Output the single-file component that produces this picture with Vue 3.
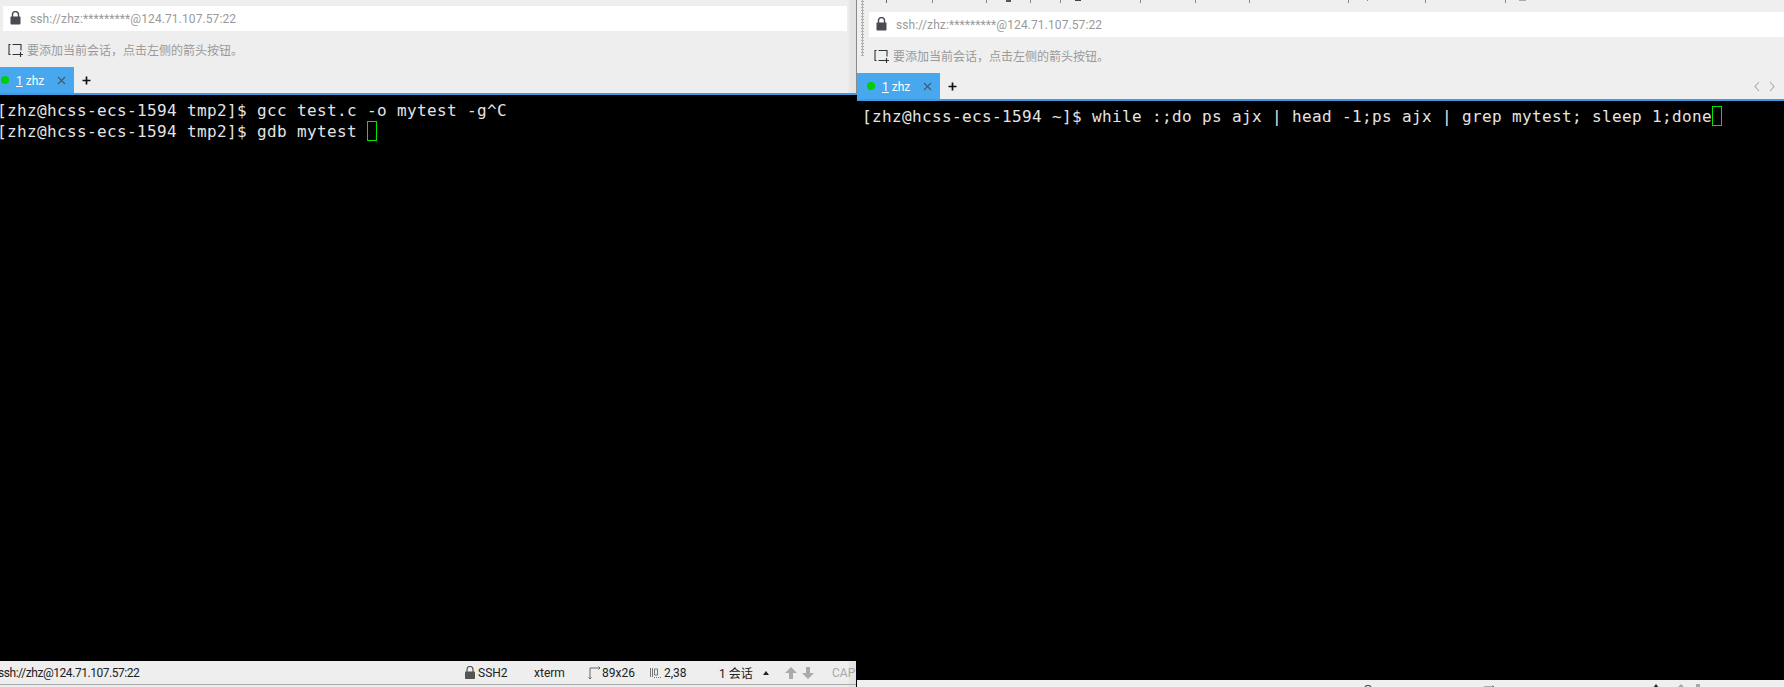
<script setup>
const ticks = [
  { x: 886, w: 1, h: 3, c: '#666' }, { x: 932, w: 1, h: 3, c: '#888' }, { x: 986, w: 1, h: 3, c: '#888' },
  { x: 1006, w: 5, h: 2, c: '#555' }, { x: 1030, w: 1, h: 3, c: '#888' }, { x: 1060, w: 1, h: 3, c: '#888' },
  { x: 1075, w: 6, h: 1, c: '#444' }, { x: 1140, w: 1, h: 3, c: '#888' }, { x: 1195, w: 1, h: 3, c: '#888' },
  { x: 1249, w: 1, h: 3, c: '#888' }, { x: 1348, w: 1, h: 3, c: '#888' }, { x: 1367, w: 1, h: 1, c: '#2c2' },
  { x: 1425, w: 1, h: 3, c: '#888' }, { x: 1505, w: 1, h: 3, c: '#888' }, { x: 1519, w: 7, h: 1, c: '#aaa' }
]
const tickRow = ticks.map((t, i) => ({
  ...t,
  gap: t.x - (i === 0 ? 857 : ticks[i - 1].x + ticks[i - 1].w)
}))
const panes = [
  {
    id: 'left',
    lines: [
      { text: '[zhz@hcss-ecs-1594 tmp2]$ gcc test.c -o mytest -g^C' },
      { text: '[zhz@hcss-ecs-1594 tmp2]$ gdb mytest ', cursor: true }
    ]
  },
  {
    id: 'right',
    lines: [
      { text: '[zhz@hcss-ecs-1594 ~]$ while :;do ps ajx | head -1;ps ajx | grep mytest; sleep 1;done', cursor: true }
    ]
  }
]
</script>

<template>
  <div class="screen">
    <template v-for="pane in panes" :key="pane.id">
      <div v-if="pane.id === 'right'" class="divider"></div>
      <section class="pane" :class="pane.id">
        <div class="head">
          <div v-if="pane.id === 'right'" class="ticks">
            <template v-for="t in tickRow" :key="t.x">
              <span class="tick-gap" :style="{ width: t.gap + 'px' }"></span>
              <span class="tick" :style="{ width: t.w + 'px', height: t.h + 'px', background: t.c }"></span>
            </template>
          </div>
          <div class="head-body">
            <div v-if="pane.id === 'right'" class="grip"></div>
            <div class="head-main">
              <div class="address">
                <svg class="lock" width="11" height="14" viewBox="0 0 11 14">
                  <path d="M2.5 6V3.6a3 3 0 0 1 6 0V6" fill="none" stroke="#4a4a52" stroke-width="1.4" />
                  <rect x="0.5" y="5.5" width="10" height="8" rx="0.8" fill="#4a4a52" />
                </svg>
                <span class="addr-text">ssh://zhz:*********@124.71.107.57:22</span>
              </div>
              <div class="hint">
                <svg class="hint-icon" width="16" height="14" viewBox="0 0 16 14">
                  <path d="M2.5 1.500H1v10h1.500M4.500 1.500h8.500v6M4.500 11.500h5.500" fill="none" stroke="#333" stroke-width="1.1" />
                  <path d="M12.500 9v5M10 11.500h5" fill="none" stroke="#333" stroke-width="1.1" />
                </svg>
                <span>要添加当前会话，点击左侧的箭头按钮。</span>
              </div>
            </div>
          </div>
          <div class="tabs">
            <div class="tab">
              <span class="dot"></span>
              <span class="tab-label"><u>1</u> zhz</span>
              <svg class="close" width="9" height="9" viewBox="0 0 9 9">
                <path d="M1 1l7 7M8 1L1 8" stroke="#555" stroke-width="1.1" fill="none" />
              </svg>
            </div>
            <svg class="plus" width="9" height="9" viewBox="0 0 9 9">
              <path d="M4.500 0.500v8M0.500 4.500h8" stroke="#111" stroke-width="1.7" fill="none" />
            </svg>
            <div v-if="pane.id === 'right'" class="chevrons">
              <svg width="6" height="11" viewBox="0 0 6 11"><path d="M5 1L1 5.500 5 10" fill="none" stroke="#aaa" stroke-width="1.1" /></svg>
              <svg width="6" height="11" viewBox="0 0 6 11"><path d="M1 1l4 4.500L1 10" fill="none" stroke="#aaa" stroke-width="1.1" /></svg>
            </div>
          </div>
        </div>
        <div class="term">
          <div v-for="(line, i) in pane.lines" :key="i" class="term-line">{{ line.text }}<span v-if="line.cursor" class="cursor"></span></div>
        </div>
        <footer class="status">
          <span class="st-url">ssh://zhz@124.71.107.57:22</span>
          <span class="st-item st-ssh">
            <svg width="10" height="13" viewBox="0 0 10 13">
              <path d="M2 6V3.400a3 3 0 0 1 6 0V6" fill="none" stroke="#555" stroke-width="1.2" />
              <rect x="0" y="5.500" width="10" height="7.500" rx="0.8" fill="#555" />
            </svg>
            SSH2
          </span>
          <span class="st-item st-term">xterm</span>
          <span class="st-item st-size">
            <svg width="13" height="13" viewBox="0 0 13 13">
              <path d="M2 2h10M2 2v10M.5 11.500l1.500 1.500 1.500-1.500M10.500 .5L12 2l-1.500 1.500" fill="none" stroke="#666" stroke-width="1" />
            </svg>
            89x26
          </span>
          <span class="st-item st-pos">
            <svg width="11" height="11" viewBox="0 0 11 11">
              <path d="M.5 1v9M2.500 1v9M4.500 2h3v6h-3zM4 10.500h1M6 10.500h1M8 10.500h1M10 10.500h1" fill="none" stroke="#777" stroke-width="1" />
            </svg>
            2,38
          </span>
          <span class="st-item st-sess">1 会话</span>
          <span class="st-item st-up">
            <svg width="6" height="4" viewBox="0 0 6 4"><path d="M3 0l3 4H0z" fill="#222" /></svg>
          </span>
          <span class="st-item st-arrows">
            <svg width="12" height="12" viewBox="0 0 12 12"><path d="M6 0l6 6H8v6H4V6H0z" fill="#aaa" /></svg>
            <svg width="12" height="12" viewBox="0 0 12 12"><path d="M6 12L0 6h4V0h4v6h4z" fill="#aaa" /></svg>
          </span>
          <span class="st-item st-cap">CAP</span>
        </footer>
      </section>
    </template>
  </div>
</template>

<style scoped>
.screen {
  display: flex;
  width: 1784px;
  height: 687px;
  overflow: hidden;
  background: #eeeeee;
  font-family: Roboto, "Noto Sans CJK SC", sans-serif;
  font-size: 12px;
}
.pane {
  display: flex;
  flex-direction: column;
  min-width: 0;
  overflow: hidden;
}
.pane.left {
  width: 856px;
  flex: none;
  padding-bottom: 2px;
  background: linear-gradient(90deg, #eeeeee 848px, #e5e5e5 850px, #e2e2e2 856px);
}
.pane.right {
  flex: 1;
  background: #efefef;
}
.divider {
  flex: none;
  width: 1px;
  background: linear-gradient(180deg, #8a8a8a 95px, #000 95px);
}
.head {
  flex: none;
}
.left .head {
  padding-top: 6px;
}
.ticks {
  display: flex;
  height: 3px;
  margin-bottom: 9px;
}
.tick-gap,
.tick {
  flex: none;
}
.head-body {
  display: flex;
}
.grip {
  flex: none;
  width: 12px;
  height: 56px;
  margin-top: -12px;
  background-image: radial-gradient(circle, #b0b0b0 1px, transparent 1.1px);
  background-size: 3px 3px;
  background-position: 4px 0;
  background-repeat: repeat-y;
}
.head-main {
  flex: 1;
  min-width: 0;
}
.address {
  display: flex;
  align-items: center;
  height: 25px;
  background: #ffffff;
  color: #9a9a9a;
  letter-spacing: 0.1px;
}
.left .address {
  margin: 0 9px 0 3px;
}
.lock {
  flex: none;
  margin-left: 7px;
  margin-right: 9px;
  margin-top: -2px;
}
.addr-text {
  padding-top: 2px;
  line-height: 23px;
  white-space: nowrap;
}
.hint {
  display: flex;
  align-items: center;
  box-sizing: border-box;
  height: 36px;
  padding-top: 1px;
  color: #9a9a9a;
  white-space: nowrap;
}
.left .hint {
  padding-left: 8px;
}
.right .hint {
  padding-left: 5px;
}
.hint-icon {
  flex: none;
  margin-right: 3px;
}
.tabs {
  display: flex;
  align-items: center;
  height: 26px;
  border-bottom: 2px solid #3f9be3;
}
.tab {
  display: flex;
  align-items: center;
  align-self: stretch;
  flex: none;
  width: 74px;
  background: #47a7ef;
  color: #ffffff;
  box-sizing: border-box;
}
.right .tab {
  width: 83px;
  padding-left: 9px;
}
.dot {
  flex: none;
  width: 8px;
  height: 8px;
  margin-left: 1px;
  border-radius: 50%;
  background: #00cf00;
}
.tab-label {
  margin-left: 7px;
  width: 41px;
  padding-top: 2px;
  white-space: nowrap;
}
.close {
  flex: none;
}
.plus {
  flex: none;
  margin-left: 8px;
}
.chevrons {
  display: flex;
  gap: 9px;
  margin-left: auto;
  margin-right: 9px;
}
.term {
  flex: 1;
  background: #000000;
  color: #e4e4e4;
  font-family: "DejaVu Sans Mono", monospace;
  font-size: 16px;
  letter-spacing: 0.367px;
  line-height: 21px;
  padding-top: 5px;
  white-space: pre;
  overflow: hidden;
}
.left .term {
  text-indent: -3px;
}
.right .term {
  padding-left: 5px;
}
.term-line {
  height: 21px;
}
.cursor {
  display: inline-block;
  box-sizing: border-box;
  width: 10px;
  height: 20px;
  vertical-align: top;
  border: 1px solid #00e600;
  text-indent: 0;
}
.status {
  flex: none;
  display: flex;
  align-items: center;
  height: 23px;
  color: #222222;
  white-space: nowrap;
  border-bottom: 1px solid #aaaaaa;
}
.right .status {
  height: 7px;
  overflow: hidden;
  align-items: flex-start;
  border-bottom: none;
  padding-top: 4px;
  box-sizing: border-box;
  padding-left: 41px;
  color: transparent;
}
.st-item {
  display: flex;
  align-items: center;
  flex: none;
}
.st-url {
  flex: none;
  width: 467px;
  margin-left: -2px;
  letter-spacing: -0.45px;
}
.right .st-url {
  visibility: hidden;
}
.st-ssh {
  width: 69px;
  gap: 3px;
}
.right .st-ssh {
  width: 65px;
}
.st-term {
  width: 54px;
}
.st-size {
  width: 62px;
  gap: 1px;
}
.right .st-size {
  width: 58px;
}
.st-pos {
  width: 69px;
  gap: 3px;
}
.st-sess {
  width: 44px;
}
.st-up {
  width: 22px;
}
.st-arrows {
  width: 47px;
  gap: 5px;
}
.st-cap {
  color: #a8a8a8;
}
.right .st-cap {
  color: transparent;
}
</style>

<style>
html, body {
  margin: 0;
  background: #eeeeee;
}
</style>
